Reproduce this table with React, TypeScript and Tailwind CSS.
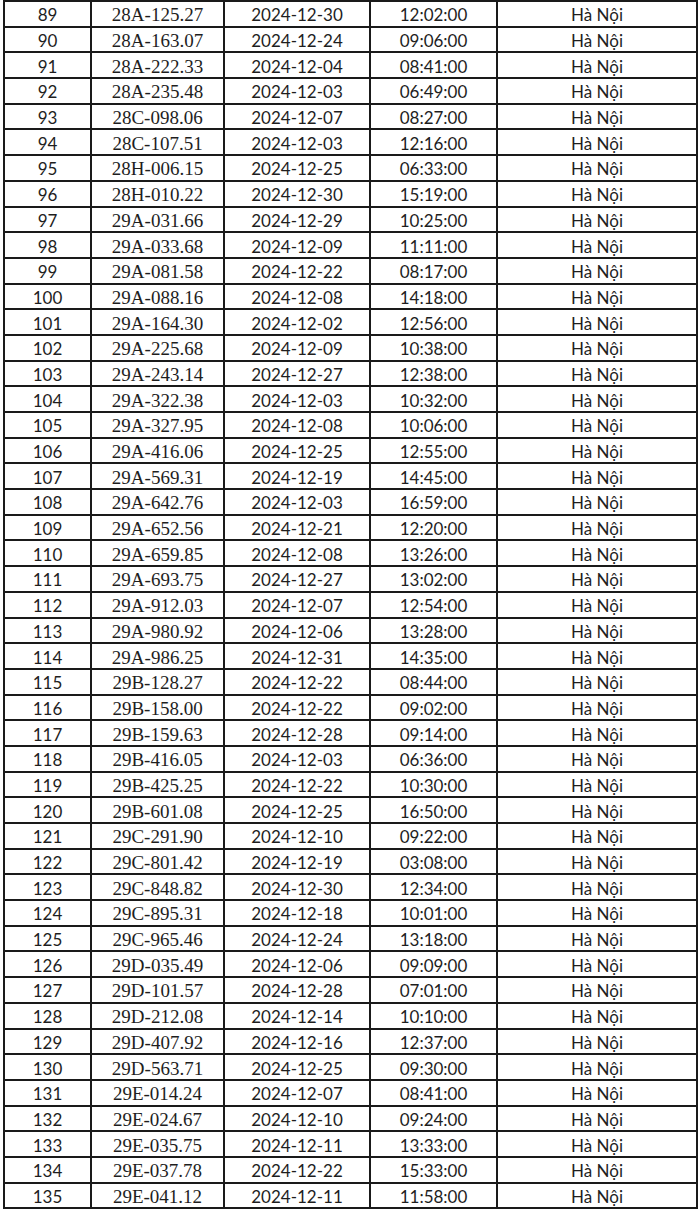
const rows = `89 28A-125.27 2024-12-30 12:02:00
90 28A-163.07 2024-12-24 09:06:00
91 28A-222.33 2024-12-04 08:41:00
92 28A-235.48 2024-12-03 06:49:00
93 28C-098.06 2024-12-07 08:27:00
94 28C-107.51 2024-12-03 12:16:00
95 28H-006.15 2024-12-25 06:33:00
96 28H-010.22 2024-12-30 15:19:00
97 29A-031.66 2024-12-29 10:25:00
98 29A-033.68 2024-12-09 11:11:00
99 29A-081.58 2024-12-22 08:17:00
100 29A-088.16 2024-12-08 14:18:00
101 29A-164.30 2024-12-02 12:56:00
102 29A-225.68 2024-12-09 10:38:00
103 29A-243.14 2024-12-27 12:38:00
104 29A-322.38 2024-12-03 10:32:00
105 29A-327.95 2024-12-08 10:06:00
106 29A-416.06 2024-12-25 12:55:00
107 29A-569.31 2024-12-19 14:45:00
108 29A-642.76 2024-12-03 16:59:00
109 29A-652.56 2024-12-21 12:20:00
110 29A-659.85 2024-12-08 13:26:00
111 29A-693.75 2024-12-27 13:02:00
112 29A-912.03 2024-12-07 12:54:00
113 29A-980.92 2024-12-06 13:28:00
114 29A-986.25 2024-12-31 14:35:00
115 29B-128.27 2024-12-22 08:44:00
116 29B-158.00 2024-12-22 09:02:00
117 29B-159.63 2024-12-28 09:14:00
118 29B-416.05 2024-12-03 06:36:00
119 29B-425.25 2024-12-22 10:30:00
120 29B-601.08 2024-12-25 16:50:00
121 29C-291.90 2024-12-10 09:22:00
122 29C-801.42 2024-12-19 03:08:00
123 29C-848.82 2024-12-30 12:34:00
124 29C-895.31 2024-12-18 10:01:00
125 29C-965.46 2024-12-24 13:18:00
126 29D-035.49 2024-12-06 09:09:00
127 29D-101.57 2024-12-28 07:01:00
128 29D-212.08 2024-12-14 10:10:00
129 29D-407.92 2024-12-16 12:37:00
130 29D-563.71 2024-12-25 09:30:00
131 29E-014.24 2024-12-07 08:41:00
132 29E-024.67 2024-12-10 09:24:00
133 29E-035.75 2024-12-11 13:33:00
134 29E-037.78 2024-12-22 15:33:00
135 29E-041.12 2024-12-11 11:58:00`
  .split("\n")
  .map((line) => line.split(" "))

const sans = "font-['Lato','Open_Sans',sans-serif] text-[17px]"
const serif = "font-['Liberation_Serif','Times_New_Roman',serif] text-[19px]"
const cell = "flex items-center justify-center border-r-2 border-b-2 border-[#1a1a1a] h-[25.7px] leading-none pt-[2px]"

export default function App() {
  return (
    <div className="bg-white min-h-[1214px] w-[700px] text-[#1e1e1e]">
      <div className="ml-[3px] w-[695px] border-l-2 border-t-2 border-[#1a1a1a]">
        {rows.map(([no, plate, date, time]) => (
          <div key={no} className="flex">
            <div className={`${cell} ${sans} w-[87px]`}>{no}</div>
            <div className={`${cell} ${serif} w-[133px]`}>{plate}</div>
            <div className={`${cell} ${sans} w-[146px]`}>{date}</div>
            <div className={`${cell} ${sans} w-[127px]`}>{time}</div>
            <div className={`${cell} ${sans} w-[200px]`}>Hà Nội</div>
          </div>
        ))}
      </div>
    </div>
  )
}
